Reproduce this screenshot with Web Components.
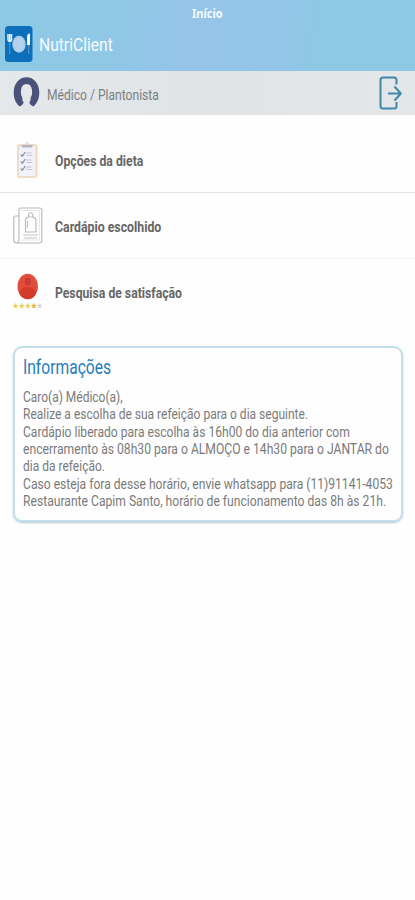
<!DOCTYPE html>
<html lang="pt-BR">
<head>
<meta charset="utf-8">
<title>NutriClient</title>
<style>
    body {
        margin: 0;
        background: #fefefe;
        font-family: Roboto, "Liberation Sans", sans-serif;
    }
</style>
</head>
<body>
<nutri-app></nutri-app>

<script>
// one line of text, condensed or widened to the given width
class FitText extends HTMLElement {
    constructor() {
        super()
        this.attachShadow({ mode: 'open' })
        this.shadowRoot.innerHTML = `
            <style>
                :host { display: block; white-space: nowrap; }
                span { display: inline-block; transform-origin: 0 50%; }
            </style>
            <span><slot></slot></span>
        `
    }

    connectedCallback() {
        const width = Number(this.getAttribute('width'))
        const span = this.shadowRoot.querySelector('span')
        this.style.width = `${width}px`
        span.style.transform = `scaleX(${width / span.offsetWidth})`
    }
}

class AppHeader extends HTMLElement {
    constructor() {
        super()
        this.attachShadow({ mode: 'open' })
        this.shadowRoot.innerHTML = `
            <style>
                :host {
                    display: block;
                    height: 71px;
                    background: linear-gradient(100deg, #8dc9e5 0%, #90c7e6 30%, #95c4e8 45%, #94c5e8 66%, #8dc8e5 76%, #8dc8e5 100%);
                    color: #f5fbff;
                }
                .screen {
                    display: flex;
                    justify-content: center;
                    height: 26px;
                    font: bold 12.5px/27px "Noto Sans", sans-serif;
                }
                .brand {
                    display: flex;
                    align-items: center;
                    gap: 5.5px;
                    padding-left: 5px;
                    height: 36px;
                    font-size: 19px;
                    line-height: 36px;
                }
                .brand fit-text { padding-top: 2px; }
                svg { display: block; }
            </style>
            <div class="screen"><fit-text width="31">Início</fit-text></div>
            <div class="brand">
                <svg width="28" height="36" viewBox="0 0 28 36">
                    <rect width="27.5" height="36" rx="3.5" fill="#0b70b9"/>
                    <ellipse cx="14" cy="18.3" rx="6.7" ry="8.5" fill="#a9cbea"/>
                    <ellipse cx="14" cy="18.3" rx="5" ry="6.6" fill="#b5d1ed"/>
                    <path d="M3 8v6q1.700 3 3.500 0V8M4.750 8v7" fill="none" stroke="#e5f2fb" stroke-width="1.500"/>
                    <path d="M4.750 16v12" stroke="#4a91ca" stroke-width="1.200"/>
                    <path d="M22 19V11q0-3.500 3-3.500V19z" fill="#f4faff"/>
                    <path d="M23.700 19v9" stroke="#4a91ca" stroke-width="1.300"/>
                </svg>
                <fit-text width="74">NutriClient</fit-text>
            </div>
        `
    }
}

class UserBar extends HTMLElement {
    constructor() {
        super()
        this.attachShadow({ mode: 'open' })
        this.shadowRoot.innerHTML = `
            <style>
                :host {
                    display: flex;
                    align-items: center;
                    box-sizing: border-box;
                    height: 44px;
                    padding: 0 12px 0 13px;
                    background: linear-gradient(90deg, #e5e8ea, #e0e4e6 50%, #e4e7e9);
                    color: #7b7e82;
                    font-size: 15px;
                }
                fit-text { margin: 4px auto 0 7px; }
                svg { display: block; }
            </style>
            <svg width="27" height="32" viewBox="0 0 27 32">
                <path d="M6.500 29.500C2.500 26 .7 21 .7 15.500 .7 6.500 6.300.3 13.500.3S26.300 6.500 26.300 15.500c0 5.500-1.800 10.500-5.800 14-2-.8-3.500-2-4.200-4 1.200-1.500 1.400-3 1.400-5 1.600-2.500 1.500-5 1.300-7.500-.4-4-2.300-6-5.500-6s-5.100 2-5.500 6c-.2 2.500-.3 5 1.300 7.500 0 2 .2 3.500 1.400 5-.7 2-2.200 3.200-4.200 4z" fill="#4a527b"/>
            </svg>
            <fit-text width="112"><slot></slot></fit-text>
            <svg width="25" height="34" viewBox="0 0 25 34">
                <g fill="none" stroke="#3f88aa" stroke-width="2" stroke-linejoin="round">
                    <path d="M18.500 8.500V4q0-2.500-2.500-2.500H5Q2.500 1.500 2.500 4v26q0 2.500 2.500 2.500h11q2.500 0 2.500-2.500v-4"/>
                    <path d="M10 17.500h12.500M16.500 10.500l6.300 7-6.300 7"/>
                </g>
            </svg>
        `
    }
}

const icons = {
    diet: `
        <path d="M11.500 5.500L14 2l2.500 3.500" fill="none" stroke="#d5d7db" stroke-width="1"/>
        <rect x="5" y="5" width="18.500" height="32" rx="1.500" fill="#f1f2fa" stroke="#ecd4b6" stroke-width="1.600"/>
        <rect x="8.500" y="5" width="11" height="2.500" rx="1" fill="#b3b8c0"/>
        <g fill="none" stroke="#8493aa" stroke-width="1.200">
            <path d="M7.800 14.500l1.500 1.700 3-4M7.800 21.500l1.500 1.700 3-4M7.800 28.500l1.500 1.700 3-4"/>
        </g>
        <g stroke="#bfc4d4" stroke-width="1">
            <path d="M13.500 13h5M13.500 15.500h6M13.500 20h5M13.500 22.500h6M13.500 27h5M13.500 29.500h6"/>
        </g>`,
    menu: `
        <g fill="none" stroke="#b8b8b8" stroke-width="1.100">
            <path d="M6 10H2.500Q.8 10 .8 12v22q0 3 3 3h22q3 0 3-3V4q0-2-2-2H8Q6 2 6 4v29q0 4-2.500 4"/>
            <path d="M8 4.500h18.500V34H8" stroke="#e8e8e8"/>
            <path d="M12.500 26V14.500q0-3 3-3.500V8.500q2.200-3.500 4.400 0V11q3 .5 3 3.500V26z" stroke="#b8b8b8"/>
            <path d="M14.500 15v7M15.500 11h4.500M10 29h15M11 32h13" stroke="#c2c2c2"/>
        </g>`,
    survey: `
        <ellipse cx="14.700" cy="14.500" rx="10.200" ry="12.700" fill="#e24c3b"/>
        <ellipse cx="14.700" cy="9.500" rx="3" ry="4" fill="#c83e32"/>
        <path d="M6.500 21.500q1.500-6.500 8.200-6.500t8.200 6.500q-2.500 5.700-8.200 5.700t-8.200-5.700z" fill="#d23a29"/>
        <g fill="#f0cf61">
            <path id="star" d="M2.500 30.700l.9 2 1.800.2-1.300 1.500.4 2.100-1.800-1-1.800 1 .4-2.100L-.2 32.900l1.800-.2z"/>
            <use href="#star" x="6.200"/>
            <use href="#star" x="12.400"/>
            <use href="#star" x="18.400" fill="#e6b93f"/>
        </g>
        <path d="M26.700 31l.8 1.800 1.600.2-1.200 1.400.4 1.900-1.600-.9-1.600.9.400-1.900-1.200-1.400 1.600-.2z" fill="#d2d3db"/>`
}

class MenuItem extends HTMLElement {
    constructor() {
        super()
        this.attachShadow({ mode: 'open' })
    }

    connectedCallback() {
        this.shadowRoot.innerHTML = `
            <style>
                :host {
                    display: flex;
                    align-items: center;
                    gap: 12px;
                    box-sizing: border-box;
                    height: 66px;
                    padding: 0 13px;
                    border-bottom: 1px solid var(--line, #e6e6e6);
                    color: #666;
                    font-size: 14.5px;
                    font-weight: 700;
                }
                svg { display: block; overflow: visible; }
                fit-text { padding-top: 4px; }
            </style>
            <svg width="30" height="40" viewBox="0 0 30 40">${icons[this.getAttribute('icon')]}</svg>
            <fit-text width="${this.getAttribute('width')}"><slot></slot></fit-text>
        `
    }
}

class InfoCard extends HTMLElement {
    constructor() {
        super()
        this.attachShadow({ mode: 'open' })
        this.shadowRoot.innerHTML = `
            <style>
                :host {
                    display: block;
                    box-sizing: border-box;
                    height: 176px;
                    margin: 21px 12px 0 13px;
                    padding: 8px 7.5px;
                    border: 2px solid #c2dee9;
                    border-radius: 9px;
                    box-shadow: 0 1px 2px #b4c8d2;
                    color: #7a7a7a;
                    font-size: 14.5px;
                    line-height: 17.35px;
                }
                .title {
                    height: 33px;
                    color: #1e7dbb;
                    font-size: 19.5px;
                    line-height: 24px;
                }
            </style>
            <div class="title"><slot name="title"></slot></div>
            <slot></slot>
        `
    }
}

class NutriApp extends HTMLElement {
    constructor() {
        super()
        this.attachShadow({ mode: 'open' })
        this.shadowRoot.innerHTML = `
            <style>
                :host { display: block; height: 900px; overflow: hidden; }
                nav { padding-top: 12px; }
                .faint { --line: #f3f3f3; }
                .last { --line: transparent; }
            </style>
            <app-header></app-header>
            <user-bar>Médico / Plantonista</user-bar>
            <nav>
                <menu-item icon="diet" width="88.5">Opções da dieta</menu-item>
                <menu-item class="faint" icon="menu" width="106">Cardápio escolhido</menu-item>
                <menu-item class="last" icon="survey" width="127">Pesquisa de satisfação</menu-item>
            </nav>
            <info-card>
                <fit-text slot="title" width="88">Informações</fit-text>
                <fit-text width="100">Caro(a) Médico(a),</fit-text>
                <fit-text width="285">Realize a escolha de sua refeição para o dia seguinte.</fit-text>
                <fit-text width="327">Cardápio liberado para escolha às 16h00 do dia anterior com</fit-text>
                <fit-text width="366">encerramento às 08h30 para o ALMOÇO e 14h30 para o JANTAR do</fit-text>
                <fit-text width="82">dia da refeição.</fit-text>
                <fit-text width="370">Caso esteja fora desse horário, envie whatsapp para (11)91141-4053</fit-text>
                <fit-text width="363">Restaurante Capim Santo, horário de funcionamento das 8h às 21h.</fit-text>
            </info-card>
        `
    }
}

// the app goes first so its children upgrade once they are in the page
customElements.define('nutri-app', NutriApp)
customElements.define('app-header', AppHeader)
customElements.define('user-bar', UserBar)
customElements.define('menu-item', MenuItem)
customElements.define('info-card', InfoCard)
customElements.define('fit-text', FitText)
</script>
</body>
</html>
